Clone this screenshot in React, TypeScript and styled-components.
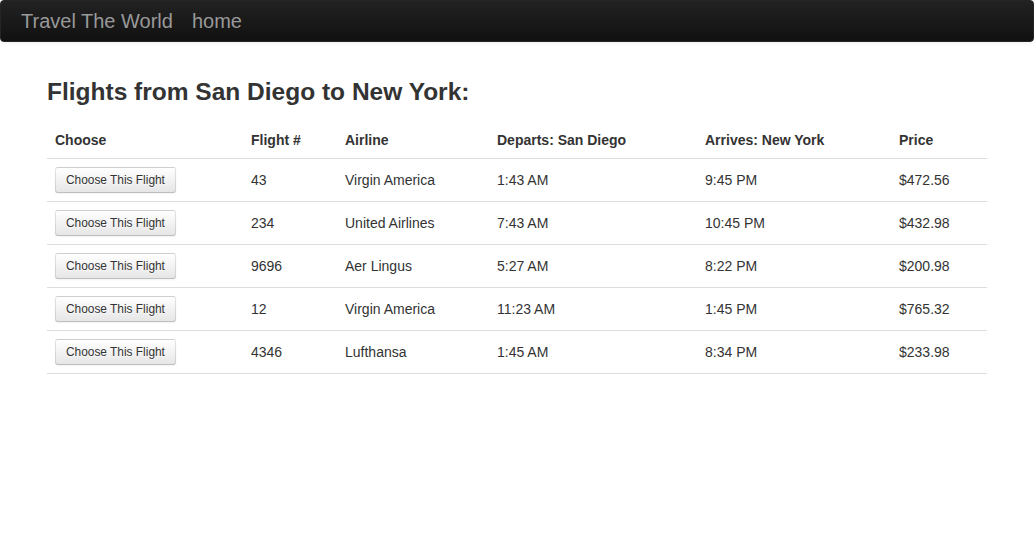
import React from 'react';
import styled, { createGlobalStyle } from 'styled-components';

const GlobalStyle = createGlobalStyle`
  html, body {
    margin: 0;
    padding: 0;
    background: #fff;
  }
  body {
    font-family: "Liberation Sans", Arial, Helvetica, sans-serif;
    font-size: 14px;
    line-height: 20px;
    color: #333;
  }
`;

interface Flight {
  number: string;
  airline: string;
  departs: string;
  arrives: string;
  price: string;
}

const flights: Flight[] = [
  { number: '43', airline: 'Virgin America', departs: '1:43 AM', arrives: '9:45 PM', price: '$472.56' },
  { number: '234', airline: 'United Airlines', departs: '7:43 AM', arrives: '10:45 PM', price: '$432.98' },
  { number: '9696', airline: 'Aer Lingus', departs: '5:27 AM', arrives: '8:22 PM', price: '$200.98' },
  { number: '12', airline: 'Virgin America', departs: '11:23 AM', arrives: '1:45 PM', price: '$765.32' },
  { number: '4346', airline: 'Lufthansa', departs: '1:45 AM', arrives: '8:34 PM', price: '$233.98' },
];

const columns = [
  { label: 'Choose', width: 196 },
  { label: 'Flight #', width: 94 },
  { label: 'Airline', width: 152 },
  { label: 'Departs: San Diego', width: 208 },
  { label: 'Arrives: New York', width: 194 },
  { label: 'Price', width: 96 },
];

const Navbar = styled.div`
  display: flex;
  align-items: center;
  min-height: 40px;
  padding: 0 20px;
  background-color: #1b1b1b;
  background-image: linear-gradient(to bottom, #222222, #111111);
  border: 1px solid #252525;
  border-radius: 4px;
  box-shadow: 0 1px 4px rgba(0, 0, 0, 0.065);
  margin-bottom: 20px;
`;

const NavLink = styled.a<{ $brand?: boolean }>`
  display: block;
  padding: 10px ${(p) => (p.$brand ? '20px' : '0')} 10px;
  margin-left: ${(p) => (p.$brand ? '-20px' : '-1px')};
  font-size: 20px;
  line-height: 20px;
  color: #999;
  text-decoration: none;
  cursor: pointer;
`;

const Container = styled.div`
  display: flow-root;
  width: 940px;
  margin: 0 auto;
`;

const Title = styled.h3`
  margin: 10px 0;
  font-size: 24.5px;
  line-height: 40px;
  font-weight: bold;
  color: #333;
`;

const Table = styled.table`
  width: 100%;
  border-collapse: collapse;
  border-spacing: 0;
  table-layout: fixed;
  border-bottom: 1px solid #ddd;
`;

const Th = styled.th`
  padding: 8px;
  text-align: left;
  vertical-align: bottom;
  font-weight: bold;
  line-height: 20px;
`;

const Td = styled.td`
  padding: 8px;
  text-align: left;
  vertical-align: middle;
  line-height: 20px;
  border-top: 1px solid #ddd;
`;

const Button = styled.button`
  display: inline-block;
  padding: 2px 10px;
  font-family: inherit;
  font-size: 11.9px;
  line-height: 20px;
  color: #333;
  text-shadow: 0 1px 1px rgba(255, 255, 255, 0.75);
  background-color: #f5f5f5;
  background-image: linear-gradient(to bottom, #ffffff, #e6e6e6);
  border: 1px solid #cccccc;
  border-color: rgba(0, 0, 0, 0.1) rgba(0, 0, 0, 0.1) rgba(0, 0, 0, 0.25);
  border-radius: 3px;
  box-shadow: inset 0 1px 0 rgba(255, 255, 255, 0.2), 0 1px 2px rgba(0, 0, 0, 0.05);
  cursor: pointer;
`;

export default function App() {
  return (
    <>
      <GlobalStyle />
      <Navbar>
        <NavLink $brand>Travel The World</NavLink>
        <NavLink>home</NavLink>
      </Navbar>
      <Container>
        <Title>Flights from San Diego to New York:</Title>
        <Table>
          <colgroup>
            {columns.map((c) => (
              <col key={c.label} style={{ width: c.width }} />
            ))}
          </colgroup>
          <thead>
            <tr>
              {columns.map((c) => (
                <Th key={c.label}>{c.label}</Th>
              ))}
            </tr>
          </thead>
          <tbody>
            {flights.map((f) => (
              <tr key={f.number}>
                <Td>
                  <Button type="button">Choose This Flight</Button>
                </Td>
                <Td>{f.number}</Td>
                <Td>{f.airline}</Td>
                <Td>{f.departs}</Td>
                <Td>{f.arrives}</Td>
                <Td>{f.price}</Td>
              </tr>
            ))}
          </tbody>
        </Table>
      </Container>
    </>
  );
}
